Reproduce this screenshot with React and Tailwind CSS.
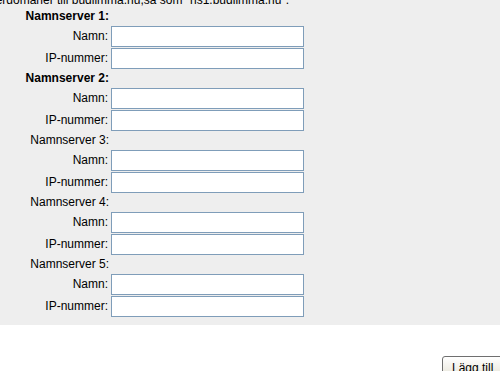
const servers = [
  { name: 'Namnserver 1:', bold: true },
  { name: 'Namnserver 2:', bold: true },
  { name: 'Namnserver 3:', bold: false },
  { name: 'Namnserver 4:', bold: false },
  { name: 'Namnserver 5:', bold: false },
];

const Field = ({ label }) => (
  <div className="flex items-center h-[22px]">
    <label className="w-[109px] pr-[1px] text-right">{label}</label>
    <input
      type="text"
      className="ml-[2px] w-[193px] h-[21px] bg-white border border-[#7f9db9] outline-none px-1"
    />
  </div>
);

export default function App() {
  return (
    <div className="w-[500px] h-[371px] overflow-hidden bg-white text-[12px] text-black font-['Liberation_Sans',Arial,sans-serif]">
      <div className="bg-[#eeeeee] pb-[8px]">
        <div className="w-[289px] h-[7px] flex justify-end whitespace-nowrap">
          <p className="-mt-[6px] leading-[13px]">
            Ange namnservrar för underdomäner till budlimma.nu,så som "ns1.budlimma.nu".
          </p>
        </div>

        {servers.map((s) => (
          <div key={s.name}>
            <div className="flex items-center h-[18px]">
              <span className={`w-[109px] text-right ${s.bold ? 'font-bold' : ''}`}>
                {s.name}
              </span>
            </div>
            <Field label="Namn:" />
            <Field label="IP-nummer:" />
          </div>
        ))}
      </div>

      <div className="pt-[31px] pl-[442px]">
        <button className="w-[72px] h-[23px] shrink-0 border border-[#6f6f6f] rounded-[3px] bg-gradient-to-b from-white to-[#e6e3d6] text-left pl-[9px] leading-[20px]">
          Lägg till
        </button>
      </div>
    </div>
  );
}
